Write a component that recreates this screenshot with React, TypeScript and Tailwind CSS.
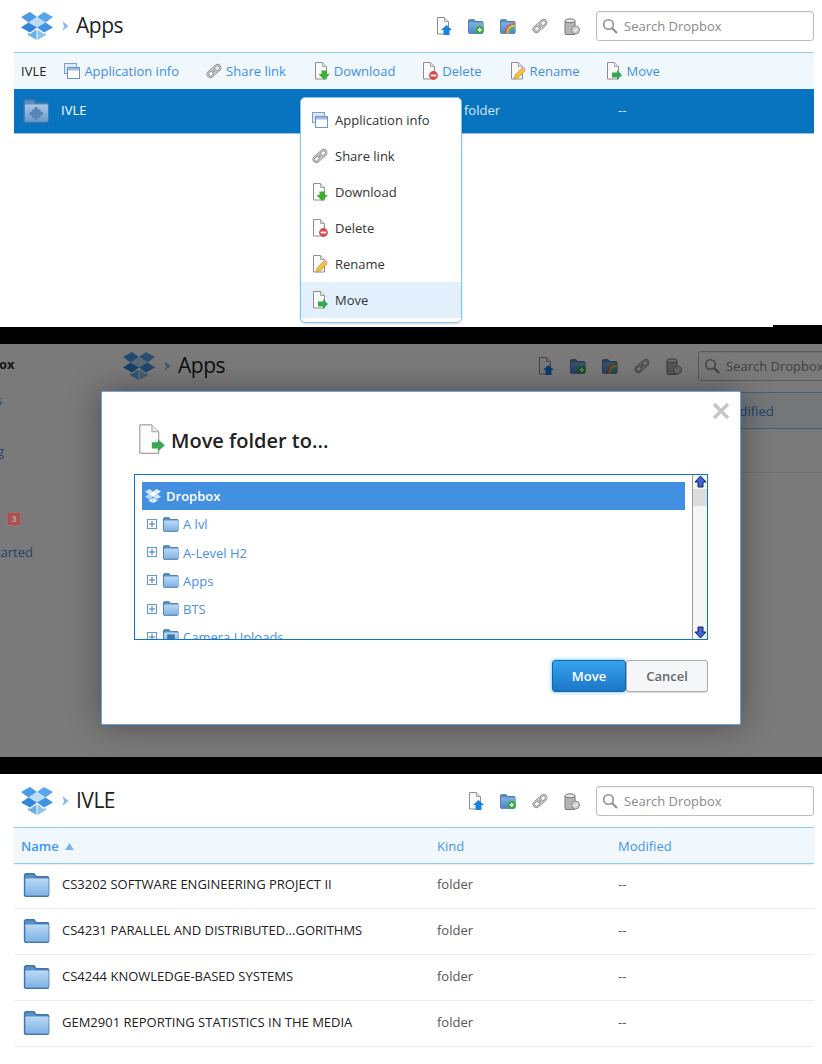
import React from "react";

const font = "font-['Open_Sans',sans-serif]";

function DropboxLogo({ size = 32, light = false }: { size?: number; light?: boolean }) {
  return (
    <svg width={size} height={(size * 28) / 32} viewBox="0 0 32 28" className="shrink-0">
      <polygon points="9,0 16,5 7.5,10.5 0,5" fill={light ? "#cfe5f9" : "#4a9be8"} />
      <polygon points="23,0 32,5 24.5,10.5 16,5" fill={light ? "#e4f1fc" : "#5aa6ec"} />
      <polygon points="16,5 24.5,10.5 16,15.5 7.5,10.5" fill={light ? "#fff" : "#bcdcf7"} />
      <polygon points="0,15.5 7.5,10.5 16,15.5 9,20.5" fill={light ? "#b9d9f6" : "#2f86dc"} />
      <polygon points="32,15.5 24.5,10.5 16,15.5 23,20.5" fill={light ? "#cfe5f9" : "#3f92e2"} />
      <polygon points="7,21 9,22 15.5,17.5 15.5,28 7,23" fill={light ? "#e4f1fc" : "#6aaeea"} />
      <polygon points="25,21 23,22 16.5,17.5 16.5,28 25,23" fill={light ? "#fff" : "#8cc2f0"} />
    </svg>
  );
}

function Page({ children, w = 16, h = 18 }: { children?: React.ReactNode; w?: number; h?: number }) {
  return (
    <svg width={w} height={h} viewBox="0 0 16 18" className="shrink-0">
      <path d="M1.5.5h7l4 4v12.5h-11z" fill="#fbfbfb" stroke="#8d8d8d" vectorEffect="non-scaling-stroke" />
      <path d="M8.5.5v4h4" fill="#e6e6e6" stroke="#a5a5a5" vectorEffect="non-scaling-stroke" />
      {children}
    </svg>
  );
}

const UploadIcon = () => (
  <Page>
    <polygon points="10.5,8 16,13 13.5,13 13.5,18 7.5,18 7.5,13 5,13" fill="#1583e4" />
  </Page>
);
const DownloadIcon = () => (
  <Page>
    <polygon points="7.5,8.5 13,8.5 13,12 15.8,12 10.2,18 4.5,12 7.5,12" fill="#3fae2f" />
  </Page>
);
const DeleteIcon = () => (
  <Page>
    <circle cx="11.5" cy="13.5" r="4.4" fill="#d8484c" />
    <rect x="8.7" y="12.6" width="5.6" height="1.8" fill="#fff" />
  </Page>
);
const RenameIcon = () => (
  <Page>
    <polygon points="4,17 5,13 12,6 15,9 8,16" fill="#f2c241" stroke="#b98a22" strokeWidth="0.6" />
    <polygon points="12,6 13.5,4.5 16,7.5 15,9" fill="#f2a9d8" />
  </Page>
);
const MoveIcon = () => (
  <Page>
    <polygon points="6,10.5 11,10.5 11,8 16,13 11,18 11,15.5 6,15.5" fill="#36a852" />
  </Page>
);
const MoveIconLarge = () => (
  <Page w={28} h={31}>
    <polygon points="8.5,10.6 12,10.6 12,8.8 16,12.4 12,16 12,14.2 8.5,14.2" fill="#36a852" />
  </Page>
);

function WindowsIcon() {
  return (
    <svg width="16" height="16" viewBox="0 0 16 16" className="shrink-0">
      <rect x="0.5" y="0.5" width="12" height="10" fill="#dbe8f8" stroke="#7d9fd0" />
      <rect x="3.5" y="4.5" width="12" height="11" fill="#fff" stroke="#6f93c8" />
      <rect x="4" y="5" width="11" height="2.5" fill="#9dbbe4" />
    </svg>
  );
}

function LinkIcon() {
  return (
    <svg width="16" height="16" viewBox="0 0 17 17" className="shrink-0">
      <g transform="rotate(-42 8.5 8.5)" fill="none">
        <rect x="0.5" y="5.7" width="9.5" height="5.6" rx="2.8" stroke="#808080" strokeWidth="2.4" />
        <rect x="7" y="5.7" width="9.5" height="5.6" rx="2.8" stroke="#808080" strokeWidth="2.4" />
        <rect x="0.5" y="5.7" width="9.5" height="5.6" rx="2.8" stroke="#d6d6d6" strokeWidth="1" />
        <rect x="7" y="5.7" width="9.5" height="5.6" rx="2.8" stroke="#d6d6d6" strokeWidth="1" />
      </g>
    </svg>
  );
}

function TrashIcon() {
  return (
    <svg width="16" height="17" viewBox="0 0 16 17" className="shrink-0">
      <path d="M1 3h10v12.5a1 1 0 0 1-1 1H2a1 1 0 0 1-1-1z" fill="#b5b5b5" stroke="#777" />
      <ellipse cx="6" cy="2.8" rx="5" ry="2" fill="#e5e5e5" stroke="#777" />
      <circle cx="11.5" cy="12" r="4" fill="#d0d0d0" stroke="#8a8a8a" />
      <path d="M9.8 12l1.3 1.4 2.2-2.6" fill="none" stroke="#fff" strokeWidth="1" />
    </svg>
  );
}

function FolderShape({ id, from, to }: { id: string; from: string; to: string }) {
  return (
    <>
      <defs>
        <linearGradient id={id} x1="0" y1="0" x2="0" y2="1">
          <stop offset="0" stopColor={from} />
          <stop offset="1" stopColor={to} />
        </linearGradient>
      </defs>
      <path d="M.5 14V1.5a1 1 0 0 1 1-1h5l1.5 2h7a1 1 0 0 1 1 1V14a1 1 0 0 1-1 1h-14a1 1 0 0 1-.5-1z" fill="#5c8fc4" stroke="#3f76ad" />
      <rect x="1" y="3.5" width="15" height="11" rx="0.5" fill={`url(#${id})`} />
    </>
  );
}

function Folder({ w = 28, h = 24, camera = false }: { w?: number; h?: number; camera?: boolean }) {
  return (
    <svg width={w} height={h} viewBox="0 0 17 15.5" className="shrink-0">
      <FolderShape id="folder-blue" from="#bcdaf5" to="#7fb2e4" />
      {camera && <rect x="4.5" y="5.5" width="8" height="6.5" fill="#3f76ad" />}
    </svg>
  );
}

function PuzzleFolder() {
  return (
    <svg width="27" height="24" viewBox="0 0 17 15.5" className="shrink-0">
      <FolderShape id="folder-app" from="#a7c8e6" to="#6b9ccb" />
      <g fill="#5686b4">
        <rect x="5.5" y="6.8" width="5.6" height="5.4" />
        <circle cx="8.3" cy="6.3" r="1.2" />
        <circle cx="11.6" cy="9.5" r="1.2" />
        <circle cx="5" cy="9.5" r="1.2" />
        <circle cx="8.3" cy="12.7" r="1.1" />
      </g>
    </svg>
  );
}

function NewFolderIcon() {
  return (
    <svg width="16" height="15" viewBox="0 0 17 15.5" className="shrink-0">
      <FolderShape id="folder-new" from="#7fb2e0" to="#4a88c4" />
      <circle cx="12.5" cy="11.3" r="4.2" fill="#35a93a" />
      <path d="M12.5 9v4.6M10.2 11.3h4.6" stroke="#fff" strokeWidth="1.4" />
    </svg>
  );
}

function SharedFolderIcon() {
  return (
    <svg width="16" height="15" viewBox="0 0 17 15.5" className="shrink-0">
      <FolderShape id="folder-shared" from="#7fb2e0" to="#4a88c4" />
      <path d="M6 15a9 9 0 0 1 10-10" fill="none" stroke="#e5533c" strokeWidth="1.5" />
      <path d="M8 15a7 7 0 0 1 8-8" fill="none" stroke="#f3c53b" strokeWidth="1.5" />
      <path d="M10 15a5 5 0 0 1 6-6" fill="none" stroke="#5db84a" strokeWidth="1.5" />
    </svg>
  );
}

function SearchBox() {
  return (
    <div className="flex h-[30px] w-[218px] shrink-0 items-center gap-[6px] rounded-[3px] border border-[#bdbdbd] bg-white pl-[5px] shadow-[inset_0_1px_2px_rgba(0,0,0,0.08)]">
      <svg width="16" height="16" viewBox="0 0 16 16" className="shrink-0">
        <circle cx="6.5" cy="6.5" r="4.8" fill="none" stroke="#8f8f8f" strokeWidth="1.6" />
        <path d="M10 10l5 5" stroke="#8f8f8f" strokeWidth="2.2" />
      </svg>
      <input
        placeholder="Search Dropbox"
        className="w-full min-w-0 bg-transparent pt-[2px] text-[13px] outline-none placeholder:text-[#8a8a8a]"
      />
    </div>
  );
}

function Header({ title, icons, tall }: { title: string; icons: React.ReactNode[]; tall?: boolean }) {
  return (
    <div className={`flex items-center pl-[21px] pr-[8px] ${tall ? "h-[53px] pt-[1px]" : "h-[52px]"}`}>
      <DropboxLogo />
      <svg width="7" height="10" viewBox="0 0 7 10" className="ml-[9px] shrink-0">
        <polygon points="0.5,0 6.5,5 0.5,10 2,5" fill="#8dbbe4" />
      </svg>
      <h1 className="mb-[1px] ml-[7px] text-[21px] leading-none tracking-[-0.5px] text-[#222]">{title}</h1>
      <div className="ml-auto mr-[16px] flex items-center gap-[16px]">
        {icons.map((icon, i) => (
          <span key={i} className="flex w-[16px] justify-center">
            {icon}
          </span>
        ))}
      </div>
      <SearchBox />
    </div>
  );
}

const actions = [
  { label: "Application info", icon: <WindowsIcon />, nudge: "" },
  { label: "Share link", icon: <LinkIcon />, nudge: "-ml-[1px]" },
  { label: "Download", icon: <DownloadIcon />, nudge: "" },
  { label: "Delete", icon: <DeleteIcon />, nudge: "-ml-[1px]" },
  { label: "Rename", icon: <RenameIcon />, nudge: "" },
  { label: "Move", icon: <MoveIcon />, nudge: "-ml-[1px]" },
];

const folders = [
  "CS3202 SOFTWARE ENGINEERING PROJECT II",
  "CS4231 PARALLEL AND DISTRIBUTED...GORITHMS",
  "CS4244 KNOWLEDGE-BASED SYSTEMS",
  "GEM2901 REPORTING STATISTICS IN THE MEDIA",
];

const treeRows = ["A lvl", "A-Level H2", "Apps", "BTS", "Camera Uploads"];

function ActionsPanel() {
  return (
    <section className="relative h-[327px] overflow-hidden bg-white">
      <Header
        title="Apps"
        icons={[<UploadIcon />, <NewFolderIcon />, <SharedFolderIcon />, <LinkIcon />, <TrashIcon />]}
      />
      <div className="ml-[14px] mr-[8px]">
        <div className="flex h-[37px] items-center gap-[18px] border-t border-[#8ccaf7] bg-[#f0f8fe] pl-[7px] text-[13px]">
          <span className="mt-[2px] text-[#222]">IVLE</span>
          <div className="flex items-center gap-[28px]">
            {actions.map((a) => (
              <span key={a.label} className={`flex items-center gap-[4px] text-[#3f8fe0] ${a.nudge}`}>
                {a.icon}
                <span className="mt-[2px]">{a.label}</span>
              </span>
            ))}
          </div>
        </div>
        <div className="flex h-[45px] items-center border-b border-[#8cc4ee] bg-[#0874c0] text-[13px] text-white">
          <span className="ml-[9px]">
            <PuzzleFolder />
          </span>
          <span className="ml-[11px] w-[403px]">IVLE</span>
          <span className="w-[154px] text-[#d5e8f7]">folder</span>
          <span className="text-[#d5e8f7]">--</span>
        </div>
      </div>

      {/* context menu */}
      <div className="absolute left-[300px] top-[97px] w-[162px] rounded-[5px] border border-[#82c3f5] bg-white pb-[4px] pt-[4px] shadow-[0_1px_3px_rgba(0,0,0,0.15)]">
        {actions.map((a) => (
          <div
            key={a.label}
            className={`flex h-[36px] items-center gap-[7px] pl-[11px] text-[13px] text-[#333] ${
              a.label === "Move" ? "bg-[#e1f0fc]" : ""
            }`}
          >
            {a.icon}
            <span className="mt-[2px]">{a.label}</span>
          </div>
        ))}
      </div>
      <div className="absolute bottom-0 right-0 h-[2px] w-[49px] bg-black" />
    </section>
  );
}

function ScrollArrow({ down }: { down?: boolean }) {
  return (
    <svg width="13" height="13" viewBox="0 0 13 13" className={down ? "rotate-180" : ""}>
      <polygon points="6.5,1 12,7 9,7 9,12 4,12 4,7 1,7" fill="#3f63d8" stroke="#10205f" strokeWidth="1" />
    </svg>
  );
}

function MoveDialog() {
  return (
    <div className="absolute left-[101px] top-[47px] h-[334px] w-[640px] rounded-[2px] border border-[#6aa6dc] bg-white shadow-[0_0_32px_rgba(0,0,0,0.38)]">
      <button className="absolute right-[10px] top-[10px]">
        <svg width="18" height="18" viewBox="0 0 18 18" className="block">
          <path d="M2 2l14 14M16 2L2 16" stroke="#c6c6c6" strokeWidth="3.4" />
        </svg>
      </button>

      <div className="flex h-[82px] items-end gap-[6px] pb-[19px] pl-[35px]">
        <MoveIconLarge />
        <h2 className="text-[20px] font-semibold leading-[28px] text-[#222]">Move folder to...</h2>
      </div>

      <div className="ml-[32px] flex h-[166px] w-[574px] overflow-hidden border border-[#0d75c4]">
        <div className="flex-1 overflow-hidden pl-[7px] pt-[7px] text-[13px] text-[#4a8fe4]">
          <div className="mr-[7px] flex h-[28px] items-center gap-[5px] bg-[#4390e0] pl-[3px] font-semibold text-white">
            <DropboxLogo size={16} light />
            <span className="mt-[2px]">Dropbox</span>
          </div>
          {treeRows.map((row) => (
            <div key={row} className="flex h-[28.2px] items-center pl-[5px]">
              <svg width="10" height="10" viewBox="0 0 10 10" className="shrink-0">
                <rect x="0.5" y="0.5" width="9" height="9" fill="#fff" stroke="#5a9ad8" />
                <path d="M2 5h6M5 2v6" stroke="#3a78bd" />
              </svg>
              <span className="ml-[6px] mr-[4px]">
                <Folder w={16} h={15} camera={row === "Camera Uploads"} />
              </span>
              <span className="mt-[2px]">{row}</span>
            </div>
          ))}
        </div>
        <div className="flex w-[15px] shrink-0 flex-col items-center border-l border-[#999] bg-[#f6f6f6]">
          <ScrollArrow />
          <div className="mt-[1px] h-[17px] w-[14px] bg-[#dcdcdc]" />
          <div className="flex-1" />
          <ScrollArrow down />
        </div>
      </div>

      <div className="mr-[32px] mt-[20px] flex justify-end text-[13px] font-semibold">
        <button className="h-[32px] w-[74px] rounded-[3px] border border-[#1566a8] bg-gradient-to-b from-[#36a3ee] to-[#1b76c6] pt-[2px] text-white shadow-[0_0_4px_#63b7f5]">
          Move
        </button>
        <button className="h-[32px] w-[82px] rounded-[3px] border border-[#adadad] bg-[#f5f6f8] pt-[2px] text-[#666] shadow-[0_1px_1px_rgba(0,0,0,0.15)]">
          Cancel
        </button>
      </div>
    </div>
  );
}

function MovePanel() {
  return (
    <section className="relative h-[413px] overflow-hidden bg-white">
      <div className="-mt-[4px] flex">
        <div className="h-[420px] w-[102px] shrink-0 text-[13px] text-[#3f8fe0]">
          <p className="-ml-[41px] mt-[15px] font-bold text-[#333]">Dropbox</p>
          <p className="-ml-[40px] mt-[16px]">Photos</p>
          <p className="-ml-[42px] mt-[32px]">Sharing</p>
          <p className="relative z-10 ml-[7px] mt-[50px] flex h-[14px] w-[14px] items-center justify-center rounded-[2px] border border-[#b56666] bg-[#a35454] text-[9px] font-bold text-[#d09a9a]">
            3
          </p>
          <p className="-ml-[36px] mt-[17px] whitespace-nowrap">Get Started</p>
        </div>
        <div className="w-[822px] shrink-0">
          <Header
            title="Apps"
            icons={[<UploadIcon />, <NewFolderIcon />, <SharedFolderIcon />, <LinkIcon />, <TrashIcon />]}
          />
          <div className="ml-[14px] mr-[8px]">
            <div className="flex h-[37px] items-center border-y border-[#8ccaf7] bg-[#f0f8fe] pl-[604px] text-[13px] text-[#3f8fe0]">
              <span className="mt-[2px]">Modified</span>
            </div>
            <div className="h-[44px] border-b border-[#eaeef2]" />
          </div>
        </div>
      </div>
      <div className="absolute inset-0 bg-black/52" />
      <MoveDialog />
    </section>
  );
}

function ListPanel() {
  return (
    <section className="h-[290px] overflow-hidden bg-white">
      <Header title="IVLE" tall icons={[<UploadIcon />, <NewFolderIcon />, <LinkIcon />, <TrashIcon />]} />
      <div className="ml-[14px] mr-[8px] text-[13px]">
        <div className="flex h-[37px] items-center border-y border-[#8ccaf7] bg-[#f0f8fe] pl-[7px] pt-[2px] text-[#3f96ec] shadow-[0_1px_2px_rgba(0,0,0,0.08)]">
          <span className="flex w-[416px] items-center gap-[6px] font-semibold">
            Name
            <svg width="9" height="7" viewBox="0 0 9 7">
              <polygon points="4.5,0 9,7 0,7" fill="#7ab4e8" />
            </svg>
          </span>
          <span className="w-[181px]">Kind</span>
          <span>Modified</span>
        </div>
        {folders.map((name, i) => (
          <div
            key={name}
            className={`flex items-center border-b border-[#eaeef2] pb-[2px] ${i === 0 ? "h-[45px]" : "h-[46px]"}`}
          >
            <span className="ml-[9px]">
              <Folder />
            </span>
            <span className="ml-[11px] w-[375px] text-[#222]">{name}</span>
            <span className="w-[181px] text-[#555]">folder</span>
            <span className="text-[#555]">--</span>
          </div>
        ))}
      </div>
    </section>
  );
}

export default function App() {
  return (
    <div className={`h-[1064px] w-[822px] overflow-hidden bg-black ${font}`}>
      <ActionsPanel />
      <div className="h-[17px]" />
      <MovePanel />
      <div className="h-[17px]" />
      <ListPanel />
    </div>
  );
}
